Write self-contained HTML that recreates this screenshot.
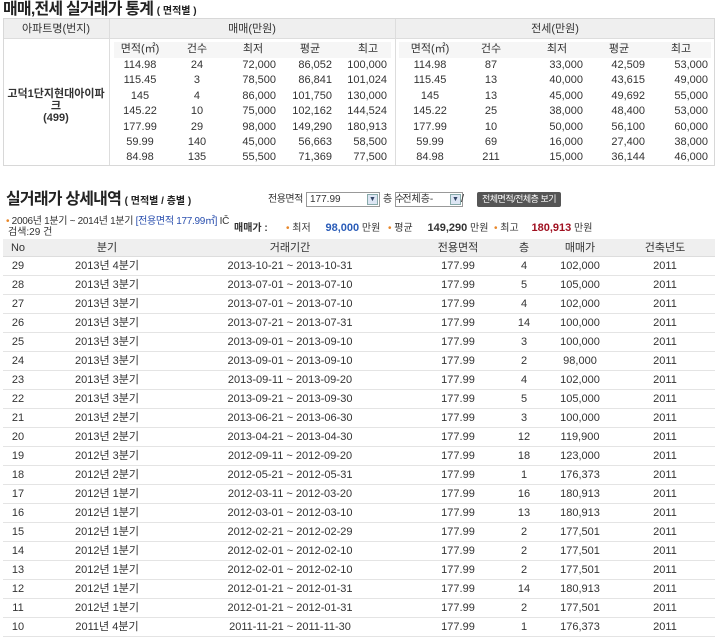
<!DOCTYPE html>
<html><head><meta charset="utf-8"><style>
*{margin:0;padding:0;box-sizing:border-box}
body{width:720px;height:638px;overflow:hidden;background:#fff;font-family:"Liberation Sans","Noto Sans CJK KR",sans-serif;font-size:11px;line-height:13px;color:#333;position:relative}
.a{position:absolute;white-space:nowrap}
.c{transform:translateX(-50%)}
.r{transform:translateX(-100%)}
.title{font-weight:bold;font-size:16px;line-height:18px;color:#222;letter-spacing:-0.8px}
.title small{font-size:10px;letter-spacing:0}
.row{position:absolute;left:3px;width:712px;height:19px;border-bottom:1px solid #e4e4e4}
.row span{position:absolute;top:0;line-height:19px;height:19px;transform:translateX(-50%);white-space:nowrap}
.s1{left:15px}.s2{left:104px}.s3{left:287px}.s4{left:455px}.s5{left:521px}.s6{left:577px}.s7{left:662px}
.dot{color:#e8872a}
.sel{position:absolute;height:15px;border:1px solid #999;padding-left:3px;line-height:13px;font-size:10px;overflow:hidden}
.sel i{position:absolute;right:1px;top:1px;width:11px;height:11px;background:#dde6f4;border:1px solid #8aa;font-size:7px;font-style:normal;text-align:center;line-height:9px;color:#346}
</style></head><body>

<div class="a title" style="left:3px;top:1px">매매,전세 실거래가 통계 <small>( 면적별 )</small></div>

<div class="a" style="left:3px;top:18px;width:712px;height:148px;border:1px solid #d8d8d8"></div>
<div class="a" style="left:4px;top:19px;width:710px;height:20px;background:#efefef;border-bottom:1px solid #ddd"></div>
<div class="a" style="left:109px;top:19px;width:1px;height:146px;background:#ddd"></div>
<div class="a" style="left:395px;top:19px;width:1px;height:146px;background:#ddd"></div>
<div class="a" style="left:114px;top:42px;width:277px;height:16px;background:#f6f6f6"></div>
<div class="a" style="left:399px;top:42px;width:312px;height:16px;background:#f6f6f6"></div>
<div class="a c" style="left:56px;top:23px">아파트명(번지)</div>
<div class="a c" style="left:252px;top:23px">매매(만원)</div>
<div class="a c" style="left:555px;top:23px">전세(만원)</div>
<div class="a c" style="left:56px;top:88px;font-weight:bold;text-align:center;line-height:12px">고덕1단지현대아이파<br>크<br>(499)</div>

<div class="a c" style="left:140px;top:43px">면적(㎡)</div><div class="a c" style="left:197px;top:43px">건수</div><div class="a c" style="left:253px;top:43px">최저</div><div class="a c" style="left:310px;top:43px">평균</div><div class="a c" style="left:368px;top:43px">최고</div>
<div class="a c" style="left:430px;top:43px">면적(㎡)</div><div class="a c" style="left:491px;top:43px">건수</div><div class="a c" style="left:557px;top:43px">최저</div><div class="a c" style="left:619px;top:43px">평균</div><div class="a c" style="left:681px;top:43px">최고</div>

<div class="a" style="left:0;top:58px;width:720px;line-height:15.4px">
<div class="a c" style="left:140px;text-align:center">114.98<br>115.45<br>145<br>145.22<br>177.99<br>59.99<br>84.98</div>
<div class="a c" style="left:197px;text-align:center">24<br>3<br>4<br>10<br>29<br>140<br>135</div>
<div class="a r" style="left:276px;text-align:right">72,000<br>78,500<br>86,000<br>75,000<br>98,000<br>45,000<br>55,500</div>
<div class="a r" style="left:332px;text-align:right">86,052<br>86,841<br>101,750<br>102,162<br>149,290<br>56,663<br>71,369</div>
<div class="a r" style="left:387px;text-align:right">100,000<br>101,024<br>130,000<br>144,524<br>180,913<br>58,500<br>77,500</div>
<div class="a c" style="left:430px;text-align:center">114.98<br>115.45<br>145<br>145.22<br>177.99<br>59.99<br>84.98</div>
<div class="a c" style="left:491px;text-align:center">87<br>13<br>13<br>25<br>10<br>69<br>211</div>
<div class="a r" style="left:583px;text-align:right">33,000<br>40,000<br>45,000<br>38,000<br>50,000<br>16,000<br>15,000</div>
<div class="a r" style="left:645px;text-align:right">42,509<br>43,615<br>49,692<br>48,400<br>56,100<br>27,400<br>36,144</div>
<div class="a r" style="left:708px;text-align:right">53,000<br>49,000<br>55,000<br>53,000<br>60,000<br>38,000<br>46,000</div>
</div>

<div class="a title" style="left:6px;top:191px">실거래가 상세내역 <small>( 면적별 / 층별 )</small></div>
<div class="a" style="left:268px;top:193px;font-size:10px;letter-spacing:-0.5px">전용면적</div>
<div class="sel" style="left:306px;top:192px;width:74px">177.99<i>▼</i></div>
<div class="a" style="left:383px;top:193px;font-size:10px">층 수</div>
<div class="sel" style="left:395px;top:192px;width:68px">-전체층-<i>▼</i></div>
<div class="a" style="left:461px;top:193px">/</div>
<div class="a" style="left:477px;top:192px;width:84px;height:15px;background:#555;color:#fff;font-size:9px;line-height:15px;text-align:center;border-radius:2px;letter-spacing:-0.5px">전체면적/전체층 보기</div>

<div class="a" style="left:6px;top:216px;font-size:10px;line-height:11px;letter-spacing:-0.3px"><span class="dot">•</span> 2006년 1분기 ~ 2014년 1분기 <span style="color:#2a4fae">[전용면적 177.99㎡]</span> IČ</div>
<div class="a" style="left:8px;top:227px;font-size:10px;line-height:11px">검색:29 건</div>
<div class="a" style="left:234px;top:222px;font-weight:bold;font-size:10px">매매가 :</div>
<div class="a" style="left:286px;top:222px;font-size:10px"><span class="dot">•</span> 최저 <b style="color:#2a5cb8;margin-left:12px;font-size:11px">98,000</b> 만원</div>
<div class="a" style="left:388px;top:222px;font-size:10px"><span class="dot">•</span> 평균 <b style="margin-left:12px;font-size:11px">149,290</b> 만원</div>
<div class="a" style="left:494px;top:222px;font-size:10px"><span class="dot">•</span> 최고 <b style="color:#a01020;margin-left:10px;font-size:11px">180,913</b> 만원</div>

<div class="row" style="top:239px;height:18px;background:#efefef;border-bottom:1px solid #ddd"><span class="s1">No</span><span class="s2">분기</span><span class="s3">거래기간</span><span class="s4">전용면적</span><span class="s5">층</span><span class="s6">매매가</span><span class="s7">건축년도</span></div>
<div class="row" style="top:257px"><span class="s1">29</span><span class="s2">2013년 4분기</span><span class="s3">2013-10-21 ~ 2013-10-31</span><span class="s4">177.99</span><span class="s5">4</span><span class="s6">102,000</span><span class="s7">2011</span></div>
<div class="row" style="top:276px"><span class="s1">28</span><span class="s2">2013년 3분기</span><span class="s3">2013-07-01 ~ 2013-07-10</span><span class="s4">177.99</span><span class="s5">5</span><span class="s6">105,000</span><span class="s7">2011</span></div>
<div class="row" style="top:295px"><span class="s1">27</span><span class="s2">2013년 3분기</span><span class="s3">2013-07-01 ~ 2013-07-10</span><span class="s4">177.99</span><span class="s5">4</span><span class="s6">102,000</span><span class="s7">2011</span></div>
<div class="row" style="top:314px"><span class="s1">26</span><span class="s2">2013년 3분기</span><span class="s3">2013-07-21 ~ 2013-07-31</span><span class="s4">177.99</span><span class="s5">14</span><span class="s6">100,000</span><span class="s7">2011</span></div>
<div class="row" style="top:333px"><span class="s1">25</span><span class="s2">2013년 3분기</span><span class="s3">2013-09-01 ~ 2013-09-10</span><span class="s4">177.99</span><span class="s5">3</span><span class="s6">100,000</span><span class="s7">2011</span></div>
<div class="row" style="top:352px"><span class="s1">24</span><span class="s2">2013년 3분기</span><span class="s3">2013-09-01 ~ 2013-09-10</span><span class="s4">177.99</span><span class="s5">2</span><span class="s6">98,000</span><span class="s7">2011</span></div>
<div class="row" style="top:371px"><span class="s1">23</span><span class="s2">2013년 3분기</span><span class="s3">2013-09-11 ~ 2013-09-20</span><span class="s4">177.99</span><span class="s5">4</span><span class="s6">102,000</span><span class="s7">2011</span></div>
<div class="row" style="top:390px"><span class="s1">22</span><span class="s2">2013년 3분기</span><span class="s3">2013-09-21 ~ 2013-09-30</span><span class="s4">177.99</span><span class="s5">5</span><span class="s6">105,000</span><span class="s7">2011</span></div>
<div class="row" style="top:409px"><span class="s1">21</span><span class="s2">2013년 2분기</span><span class="s3">2013-06-21 ~ 2013-06-30</span><span class="s4">177.99</span><span class="s5">3</span><span class="s6">100,000</span><span class="s7">2011</span></div>
<div class="row" style="top:428px"><span class="s1">20</span><span class="s2">2013년 2분기</span><span class="s3">2013-04-21 ~ 2013-04-30</span><span class="s4">177.99</span><span class="s5">12</span><span class="s6">119,900</span><span class="s7">2011</span></div>
<div class="row" style="top:447px"><span class="s1">19</span><span class="s2">2012년 3분기</span><span class="s3">2012-09-11 ~ 2012-09-20</span><span class="s4">177.99</span><span class="s5">18</span><span class="s6">123,000</span><span class="s7">2011</span></div>
<div class="row" style="top:466px"><span class="s1">18</span><span class="s2">2012년 2분기</span><span class="s3">2012-05-21 ~ 2012-05-31</span><span class="s4">177.99</span><span class="s5">1</span><span class="s6">176,373</span><span class="s7">2011</span></div>
<div class="row" style="top:485px"><span class="s1">17</span><span class="s2">2012년 1분기</span><span class="s3">2012-03-11 ~ 2012-03-20</span><span class="s4">177.99</span><span class="s5">16</span><span class="s6">180,913</span><span class="s7">2011</span></div>
<div class="row" style="top:504px"><span class="s1">16</span><span class="s2">2012년 1분기</span><span class="s3">2012-03-01 ~ 2012-03-10</span><span class="s4">177.99</span><span class="s5">13</span><span class="s6">180,913</span><span class="s7">2011</span></div>
<div class="row" style="top:523px"><span class="s1">15</span><span class="s2">2012년 1분기</span><span class="s3">2012-02-21 ~ 2012-02-29</span><span class="s4">177.99</span><span class="s5">2</span><span class="s6">177,501</span><span class="s7">2011</span></div>
<div class="row" style="top:542px"><span class="s1">14</span><span class="s2">2012년 1분기</span><span class="s3">2012-02-01 ~ 2012-02-10</span><span class="s4">177.99</span><span class="s5">2</span><span class="s6">177,501</span><span class="s7">2011</span></div>
<div class="row" style="top:561px"><span class="s1">13</span><span class="s2">2012년 1분기</span><span class="s3">2012-02-01 ~ 2012-02-10</span><span class="s4">177.99</span><span class="s5">2</span><span class="s6">177,501</span><span class="s7">2011</span></div>
<div class="row" style="top:580px"><span class="s1">12</span><span class="s2">2012년 1분기</span><span class="s3">2012-01-21 ~ 2012-01-31</span><span class="s4">177.99</span><span class="s5">14</span><span class="s6">180,913</span><span class="s7">2011</span></div>
<div class="row" style="top:599px"><span class="s1">11</span><span class="s2">2012년 1분기</span><span class="s3">2012-01-21 ~ 2012-01-31</span><span class="s4">177.99</span><span class="s5">2</span><span class="s6">177,501</span><span class="s7">2011</span></div>
<div class="row" style="top:618px"><span class="s1">10</span><span class="s2">2011년 4분기</span><span class="s3">2011-11-21 ~ 2011-11-30</span><span class="s4">177.99</span><span class="s5">1</span><span class="s6">176,373</span><span class="s7">2011</span></div>
</body></html>
